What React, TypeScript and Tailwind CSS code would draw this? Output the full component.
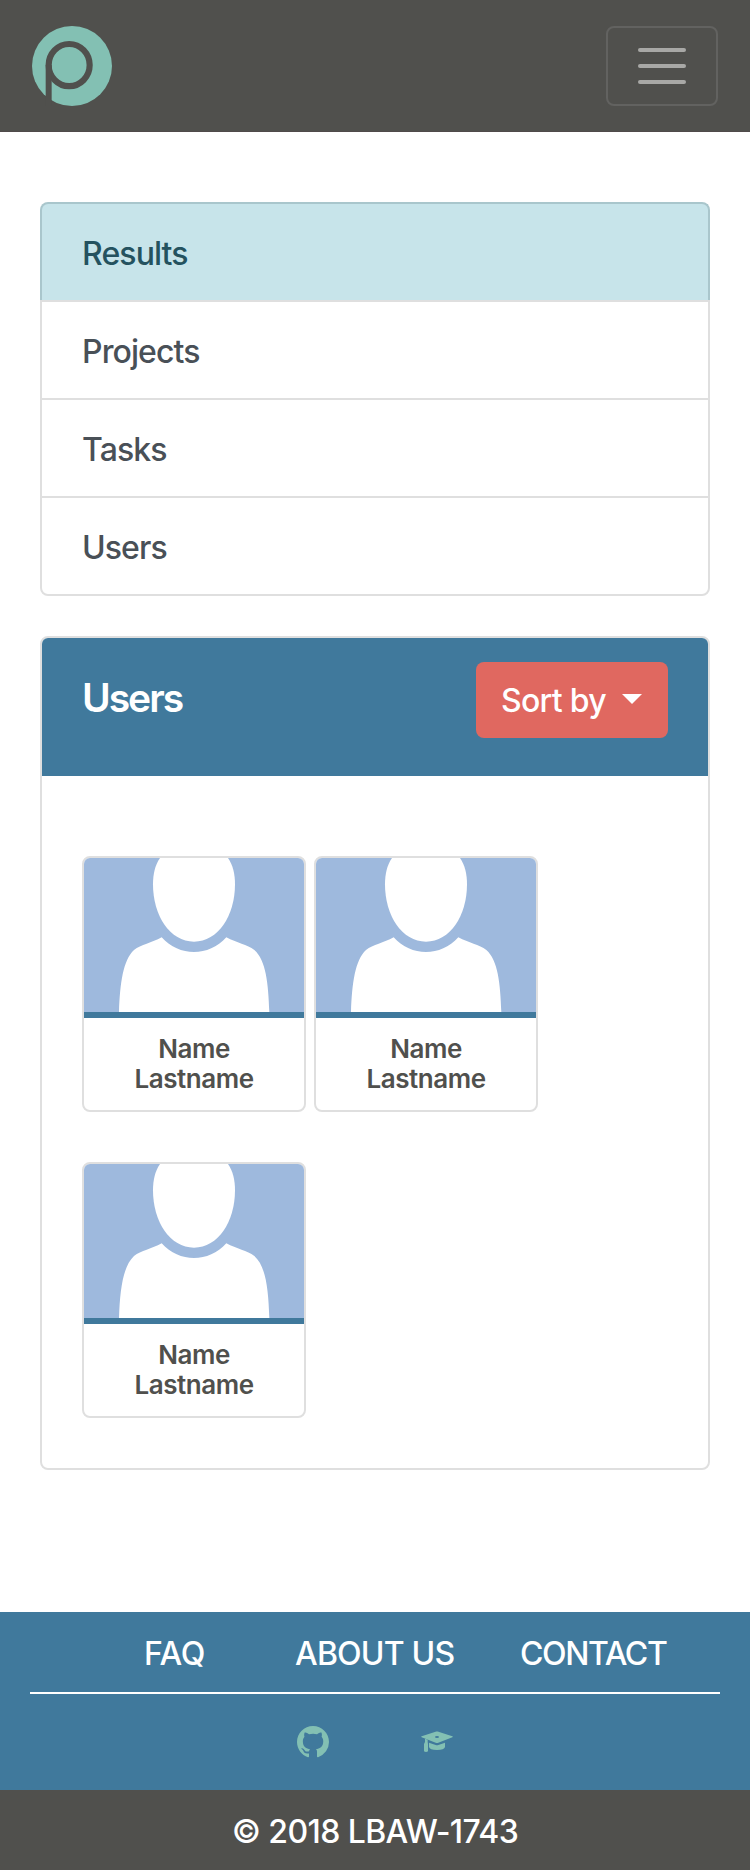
const menu = ["Projects", "Tasks", "Users"];
const people = [1, 2, 3];

function Logo() {
  return (
    <svg viewBox="0 0 240 240" className="size-20">
      <circle cx="120" cy="120" r="120" fill="#83c0b3" />
      <ellipse cx="111.5" cy="117.3" rx="61.5" ry="63.3" fill="none" stroke="#50504d" strokeWidth="18.5" />
      <path d="M41 117H59V240H41Z" fill="#50504d" />
    </svg>
  );
}

function Avatar() {
  return (
    <svg viewBox="0 0 660 462" className="block h-[154px] w-full bg-[#9eb9dd]" fill="#fff">
      <path d="M228 0C213 22 207 48 207 79C207 174 258 251 330 251S453 174 453 79C453 48 447 22 432 0Z" />
      <path d="M233 238C260 268 294 282 330 282S400 268 427 238C458 255 490 260 511 276C546 307 553 376 556 462H105C108 376 117 307 150 276C171 260 203 255 233 238Z" />
    </svg>
  );
}

function UserCard() {
  return (
    <div className="h-64 w-56 overflow-hidden rounded-lg border-2 border-[#dfdfdf] bg-white">
      <Avatar />
      <div className="border-t-6 border-[#40799c] pt-4 text-center text-[26px] leading-[30px] font-semibold tracking-[-0.45px] text-[#50504d]">
        <p>Name</p>
        <p>Lastname</p>
      </div>
    </div>
  );
}

function GithubMark() {
  return (
    <svg viewBox="0 0 16 16" className="size-8" fill="#83c0b3">
      <path d="M8 0C3.58 0 0 3.58 0 8c0 3.54 2.29 6.53 5.47 7.59.4.07.55-.17.55-.38 0-.19-.01-.82-.01-1.49-2.01.37-2.53-.49-2.69-.94-.09-.23-.48-.94-.82-1.13-.28-.15-.68-.52-.01-.53.63-.01 1.08.58 1.23.82.72 1.21 1.87.87 2.33.66.07-.52.28-.87.51-1.07-1.78-.2-3.64-.89-3.64-3.95 0-.87.31-1.59.82-2.15-.08-.2-.36-1.02.08-2.12 0 0 .67-.21 2.2.82.64-.18 1.32-.27 2-.27.68 0 1.36.09 2 .27 1.53-1.04 2.2-.82 2.2-.82.44 1.1.16 1.92.08 2.12.51.56.82 1.27.82 2.15 0 3.07-1.87 3.75-3.65 3.95.29.25.54.73.54 1.48 0 1.07-.01 1.93-.01 2.2 0 .21.15.46.55.38A8.013 8.013 0 0016 8c0-4.42-3.58-8-8-8z" />
    </svg>
  );
}

function GraduationCap() {
  return (
    <svg viewBox="0 0 96 96" className="size-8" fill="#83c0b3">
      <path
        fillRule="evenodd"
        d="M46 16.500Q48 16 50 16.500L94 30.500Q97 32 94 33.500L50 51Q48 51.700 46 51L2 33.500Q-1 32 2 30.500ZM42 33a6 3 0 1 0 12 0a6 3 0 1 0-12 0Z"
      />
      <path d="M12 38L20 41V48L21 54V76Q15 80 9 76V54L12 48Z" />
      <path d="M24 50L46 57.500Q48 58 50 57.500L72 50V63Q70 72 48 72T24 63Z" />
    </svg>
  );
}

export default function App() {
  return (
    <div className="flex h-[1870px] w-[750px] flex-col bg-white font-[Inter,sans-serif] text-[32px] leading-[48px]">
      <nav className="flex h-[132px] items-start justify-between border-b border-[#504a4a] bg-[#50504d] px-8 pt-[26px]">
        <Logo />
        <button className="flex h-20 w-28 flex-col items-center justify-center gap-3 rounded-lg border-2 border-[#626260]">
          <span className="h-1 w-12 rounded-full bg-[#a8a8a6]" />
          <span className="h-1 w-12 rounded-full bg-[#a8a8a6]" />
          <span className="h-1 w-12 rounded-full bg-[#a8a8a6]" />
        </button>
      </nav>

      <main className="flex flex-1 flex-col gap-10 px-10 pt-[70px]">
        <ul className="font-medium tracking-[-0.9px] text-[#495057]">
          <li className="h-[98px] rounded-t-lg border-2 border-b-0 border-[#a9c6cc] bg-[#c7e4ea] px-10 pt-[26px] text-[#24525f]">
            Results
          </li>
          {menu.map((item) => (
            <li key={item} className="h-[98px] border-2 border-b-0 border-[#dfdfdf] px-10 pt-[26px] last:h-[100px] last:rounded-b-lg last:border-b-2">
              {item}
            </li>
          ))}
        </ul>

        <section className="h-[834px] overflow-hidden rounded-lg border-2 border-[#dfdfdf]">
          <header className="flex h-[138px] items-start justify-between bg-[#40799c] px-10 pt-6 text-white">
            <h2 className="pt-3 text-[39px] leading-[48px] font-semibold tracking-[-2px]">Users</h2>
            <button className="flex h-[76px] w-48 items-center rounded-lg bg-[#e06860] pt-0.5 pl-[25px] font-medium tracking-[-0.7px]">
              <span>Sort by</span>
              <span className="mt-[-5px] ml-4 border-x-10 border-t-10 border-x-transparent border-t-white" />
            </button>
          </header>
          <div className="flex flex-wrap gap-x-2 gap-y-[50px] px-10 pt-20">
            {people.map((id) => (
              <UserCard key={id} />
            ))}
          </div>
        </section>
      </main>

      <footer className="text-white">
        <div className="h-[178px] bg-[#40799c] px-[30px]">
          <div className="flex h-20 items-center pt-1 pl-[114px] font-medium">
            <a className="w-[151px] tracking-[-0.4px]">FAQ</a>
            <a className="w-[225px] tracking-[-0.8px]">ABOUT US</a>
            <a className="tracking-[-1.4px]">CONTACT</a>
          </div>
          <div className="flex justify-center gap-[92px] border-t-2 border-white pt-8">
            <GithubMark />
            <GraduationCap />
          </div>
        </div>
        <p className="h-20 bg-[#50504d] pt-[18px] text-center font-medium tracking-[-0.6px]">© 2018 LBAW-1743</p>
      </footer>
    </div>
  );
}
